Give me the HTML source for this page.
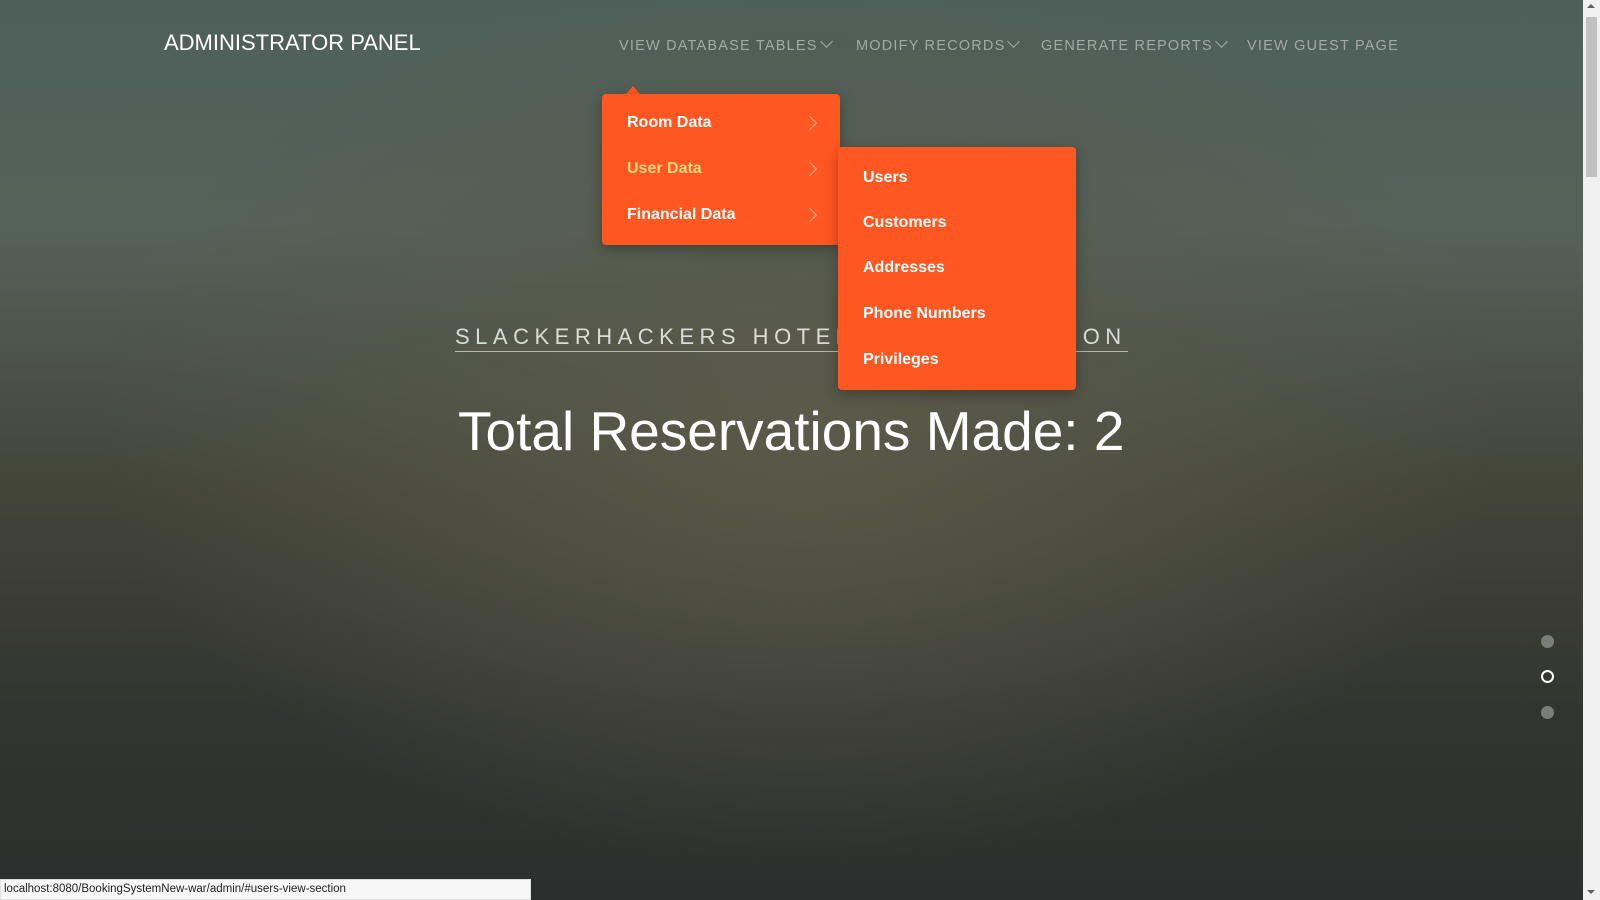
<!DOCTYPE html>
<html><head><meta charset="utf-8"><style>
*{margin:0;padding:0;box-sizing:border-box}
html,body{width:1600px;height:900px;overflow:hidden}
body{font-family:"Liberation Sans",sans-serif;position:relative;
background:radial-gradient(ellipse 700px 450px at 800px 420px,#5a5a4a 0%,rgba(80,80,70,0) 100%),linear-gradient(180deg,#4e5f5a 0%,#55625a 25%,#434438 55%,#323431 80%,#2c2f2d 100%);}
.t{position:absolute;white-space:nowrap}
.brand{left:164px;top:30px;font-size:22px;color:#fff}
.nav{top:38px;font-size:14.5px;letter-spacing:1.2px;color:#a2aaa5}
.chev{display:inline-block;width:9px;height:9px;border-right:1.5px solid #a2aaa5;border-bottom:1.5px solid #a2aaa5;transform:rotate(45deg);margin-left:4px;position:relative;top:-4px}
.dd{position:absolute;background:#ff5722;border-radius:4px;box-shadow:0 4px 14px rgba(0,0,0,.3)}
.dd .i{position:absolute;left:25px;font-size:16px;font-weight:bold;color:#fff;line-height:20px}
.arr{position:absolute;right:25px;width:10px;height:10px;border-right:1.5px solid #ffb090;border-top:1.5px solid #ffb090;transform:rotate(45deg)}
.dot{position:absolute;width:13px;height:13px;border-radius:50%;background:#7b7d7a;left:1541px}
</style></head><body>
<div class="t brand">ADMINISTRATOR PANEL</div>
<div class="t nav" style="left:619px">VIEW DATABASE TABLES<span class="chev"></span></div>
<div class="t nav" style="left:856px">MODIFY RECORDS<span class="chev"></span></div>
<div class="t nav" style="left:1041px">GENERATE REPORTS<span class="chev"></span></div>
<div class="t nav" style="left:1247px">VIEW GUEST PAGE</div>

<div class="t" style="left:455px;top:325px;width:673px;font-size:22px;letter-spacing:5.5px;color:#dcdcd6;border-bottom:1.5px solid #b8b8b0;padding-bottom:2px;line-height:24px">SLACKERHACKERS HOTEL ADMINISTRATION</div>
<div class="t" style="left:458px;top:399px;font-size:55px;color:#fff;line-height:64px">Total Reservations Made: 2</div>

<div style="position:absolute;left:626px;top:86px;width:0;height:0;border-left:7px solid transparent;border-right:7px solid transparent;border-bottom:8px solid #ff5722"></div>
<div class="dd" style="left:602px;top:94px;width:238px;height:151px">
<div class="i" style="top:19px">Room Data</div><div class="arr" style="top:24px"></div>
<div class="i" style="top:65px;color:#ffd580">User Data</div><div class="arr" style="top:70px"></div>
<div class="i" style="top:111px">Financial Data</div><div class="arr" style="top:116px"></div>
</div>
<div class="dd" style="left:838px;top:147px;width:238px;height:243px">
<div class="i" style="top:21px">Users</div>
<div class="i" style="top:66px">Customers</div>
<div class="i" style="top:111px">Addresses</div>
<div class="i" style="top:157px">Phone Numbers</div>
<div class="i" style="top:203px">Privileges</div>
</div>

<div class="dot" style="top:635px"></div>
<div class="dot" style="top:670px;background:none;border:2px solid #fff"></div>
<div class="dot" style="top:706px"></div>

<div style="position:absolute;left:1583px;top:0;width:17px;height:900px;background:#f0f0f0">
<div style="position:absolute;left:4px;top:4px;border-left:4px solid transparent;border-right:4px solid transparent;border-bottom:4px solid #606060"></div>
<div style="position:absolute;left:3px;top:17px;width:11px;height:160px;background:#c1c1c1"></div>
<div style="position:absolute;left:4px;top:890px;border-left:4px solid transparent;border-right:4px solid transparent;border-top:4px solid #606060"></div>
</div>
<div style="position:absolute;left:0;top:879px;width:531px;height:21px;background:#f7f7f7;border:1px solid #ddd;font-size:11.5px;color:#222;padding:3px 3px;white-space:nowrap">localhost:8080/BookingSystemNew-war/admin/#users-view-section</div>
</body></html>
